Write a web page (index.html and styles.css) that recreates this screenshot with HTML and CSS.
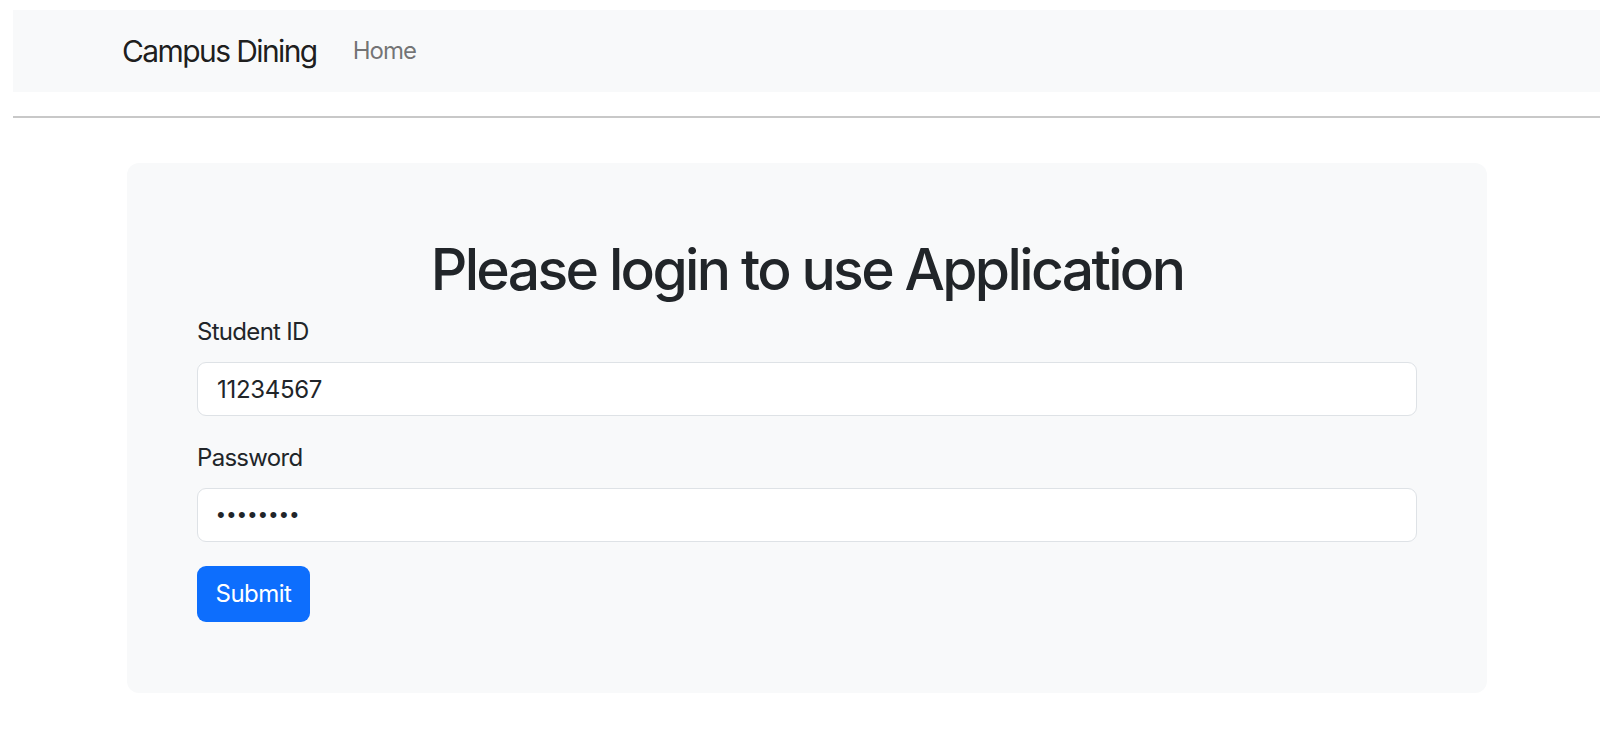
FILE: index.html
```html
<!DOCTYPE html>
<html lang="en">
<head>
<meta charset="utf-8">
<title>Campus Dining</title>
<link rel="stylesheet" href="styles.css">
</head>
<body>
<nav class="navbar">
  <a class="brand" href="#">Campus Dining</a>
  <a class="nav-link" href="#">Home</a>
</nav>
<hr class="divider">
<main class="card">
  <h1 class="title">Please login to use Application</h1>
  <form class="form">
    <div class="field">
      <label class="label" for="sid">Student ID</label>
      <input class="control" id="sid" type="text" value="11234567">
    </div>
    <div class="field">
      <label class="label" for="pw">Password</label>
      <input class="control control-password" id="pw" type="password" value="12345678">
    </div>
    <button class="btn" type="button">Submit</button>
  </form>
</main>
</body>
</html>
```
FILE: styles.css
```css
* { box-sizing: border-box; }
html, body { background: #ffffff; }
body {
  margin: 10px 0 0 13px;
  font-family: Inter, "Noto Sans", "Liberation Sans", sans-serif;
  color: #212529;
  font-size: 24px;
  line-height: 36px;
  letter-spacing: -0.7px;
}
.navbar {
  height: 82px;
  background: #f8f9fa;
  display: flex;
  align-items: center;
  gap: 36px;
  padding-left: 109px;
}
.brand {
  font-size: 30px;
  color: rgba(0, 0, 0, 0.9);
  text-decoration: none;
  letter-spacing: -1.6px;
}
.nav-link {
  font-size: 24px;
  color: rgba(0, 0, 0, 0.55);
  text-decoration: none;
  letter-spacing: -1px;
}
.divider {
  margin: 24px 0 0 0;
  border: 0;
  border-top: 2px solid #c8c8c8;
  height: 0;
}
.card {
  margin: 45px 0 0 114px;
  width: 1360px;
  background: #f8f9fa;
  border-radius: 12px;
  padding: 71px 70px 71px;
}
.title {
  margin: 0 0 8px 0;
  text-align: center;
  font-size: 57px;
  line-height: 72px;
  font-weight: 500;
  letter-spacing: -2.65px;
}
.form { display: flex; flex-direction: column; }
.field { display: flex; flex-direction: column; margin-bottom: 24px; }
.label { margin-bottom: 12px; }
.control {
  height: 54px;
  border: 1.5px solid #dee2e6;
  border-radius: 9px;
  background: #ffffff;
  padding: 0 19px;
  font: inherit;
  letter-spacing: -0.3px;
  color: #212529;
}
.control-password {
  font-family: "Liberation Sans", Arial, sans-serif;
  font-size: 22px;
  letter-spacing: 2.8px;
}
.btn {
  align-self: flex-start;
  width: 113px;
  height: 56px;
  border: 0;
  border-radius: 9px;
  background: #0d6efd;
  color: #ffffff;
  font: inherit;
  letter-spacing: -0.5px;
  padding: 0;
}
```
